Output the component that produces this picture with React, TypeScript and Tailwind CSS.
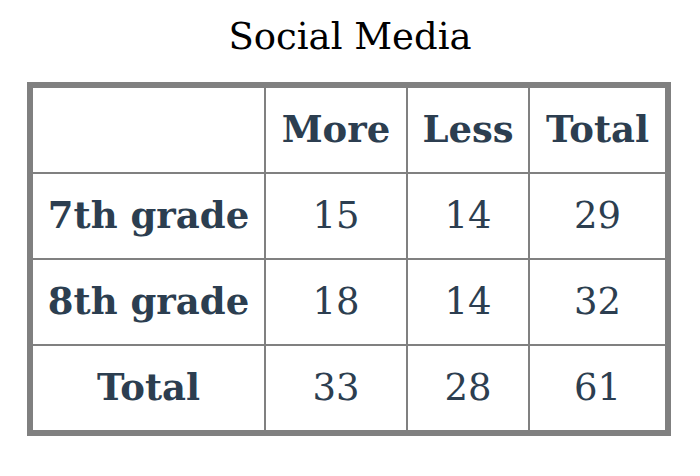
import { Fragment } from 'react';

const rows = [
  { label: '7th grade', more: 15, less: 14, total: 29 },
  { label: '8th grade', more: 18, less: 14, total: 32 },
  { label: 'Total', more: 33, less: 28, total: 61 },
];

export default function App() {
  return (
    <div className="min-h-[476px] w-[700px] bg-white pt-[13px] font-['DejaVu_Serif',serif]">
      {/* タイトル */}
      <h1 className="text-center text-[37px] leading-[48px] text-black">Social Media</h1>

      {/* 集計表 */}
      <div className="ml-[27px] mt-[21px] w-[644px] border-[6px] border-[#808080] bg-[#808080]">
        <div className="grid grid-cols-[231px_140px_120px_135px] auto-rows-[84px] gap-[2px] text-[#2c3e50]">
          <div className="bg-white" />
          <div className="flex items-center justify-center bg-white text-[37px] font-bold">More</div>
          <div className="flex items-center justify-center bg-white text-[37px] font-bold">Less</div>
          <div className="flex items-center justify-center bg-white text-[37px] font-bold">Total</div>
          {rows.map((row) => (
            <Fragment key={row.label}>
              <div className="flex items-center justify-center bg-white text-[37px] font-bold">{row.label}</div>
              <div className="flex items-center justify-center bg-white text-[37px]">{row.more}</div>
              <div className="flex items-center justify-center bg-white text-[37px]">{row.less}</div>
              <div className="flex items-center justify-center bg-white text-[37px]">{row.total}</div>
            </Fragment>
          ))}
        </div>
      </div>
    </div>
  );
}
